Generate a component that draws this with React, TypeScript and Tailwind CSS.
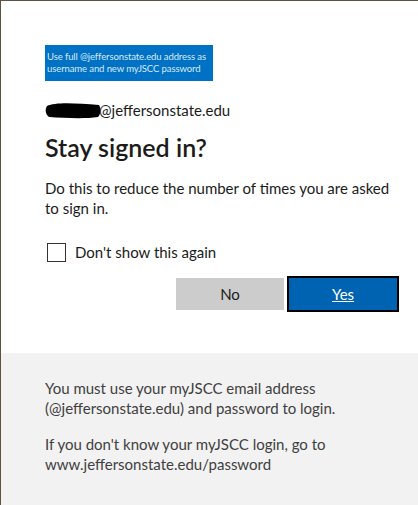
import React from 'react';

const font = { fontFamily: 'Lato, "Noto Sans", "Liberation Sans", sans-serif' };

function Blob() {
  return (
    <svg width="56" height="20" viewBox="0 0 56 20" className="shrink-0">
      <path d="M2 6 C10 2, 30 3, 54 5 C56 8, 56 14, 53 17 C40 19, 20 18, 4 17 C0 14, 0 9, 2 6 Z" fill="#000" />
    </svg>
  );
}

export default function App() {
  return (
    <div
      className="w-[418px] h-[505px] border-l border-t border-[#5b5240] bg-white flex flex-col overflow-hidden"
      style={font}
    >
      <div className="flex-1 pl-[44px] pr-[19px] pt-[44px] text-[#1b1b1b]">
        <div className="w-[168px] h-[36px] bg-[#0072c6] text-[#dbe9f7] text-[9.5px] leading-[12px] pl-[2px] pr-[1px] pt-[6px] tracking-[-0.1px]">
          Use full @jeffersonstate.edu address as username and new myJSCC password
        </div>

        <div className="mt-[19px] flex items-center h-[20px] text-[15px]">
          <Blob />
          <span className="-ml-[2px]">@jeffersonstate.edu</span>
        </div>

        <h1 className="mt-[11px] text-[25px] leading-[32px] font-semibold">Stay signed in?</h1>

        <p className="mt-[15px] text-[15px] leading-[20px]">
          Do this to reduce the number of times you are asked to sign in.
        </p>

        <label className="mt-[24px] flex items-center gap-[9px] h-[20px] text-[15px]">
          <span className="w-[19px] h-[19px] border border-[#323232] ml-[2px] bg-white" />
          Don't show this again
        </label>

        <div className="mt-[14px] flex items-center justify-end gap-[3px]">
          <button className="w-[108px] h-[32px] bg-[#cccccc] text-[15px] text-[#1b1b1b]">No</button>
          <button className="w-[112px] h-[36px] border-2 border-black bg-[#0063b1] text-[15px] text-white underline">
            Yes
          </button>
        </div>
      </div>

      <div className="h-[152px] bg-[#f2f2f2] pl-[44px] pr-[19px] pt-[25px] text-[15px] leading-[20px] text-[#404040]">
        <p>You must use your myJSCC email address (@jeffersonstate.edu) and password to login.</p>
        <p className="mt-[16px]">If you don't know your myJSCC login, go to www.jeffersonstate.edu/password</p>
      </div>
    </div>
  );
}
